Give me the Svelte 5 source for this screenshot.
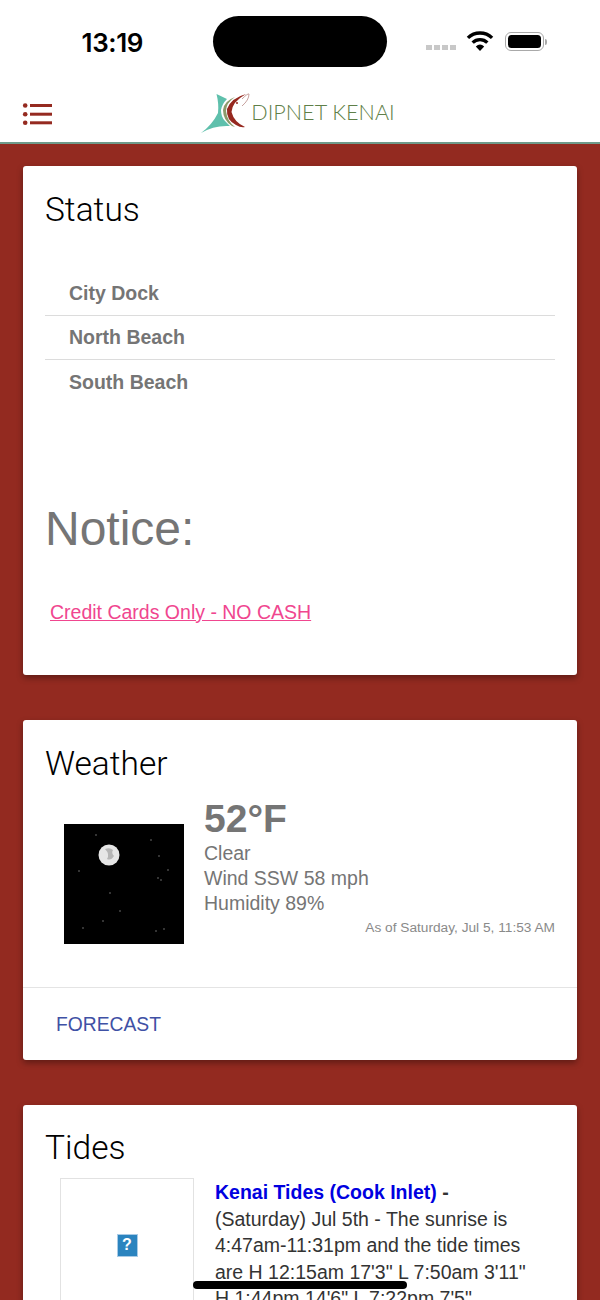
<script>
	let beaches = ['City Dock', 'North Beach', 'South Beach'];
	let stars = [[32,11],[87,16],[95,32],[104,46],[15,47],[94,54],[97,56],[46,69],[56,87],[39,97],[19,104],[92,107],[100,105]];
</script>

<div class="screen">
	<div class="status">
		<div class="time">13:19</div>
		<div class="island"></div>
		<div class="right">
			<div class="dots"><i></i><i></i><i></i><i></i></div>
			<svg class="wifi" width="28" height="21" viewBox="0 0 26 20">
				<path d="M1.5 7.5A16.5 16.5 0 0 1 24.5 7.5" fill="none" stroke="#000" stroke-width="3.2"/>
				<path d="M6 12A10 10 0 0 1 20 12" fill="none" stroke="#000" stroke-width="3.2"/>
				<path d="M9 15.6Q13 12 17 15.6L13 20Z" fill="#000"/>
			</svg>
			<div class="battery"><div class="fill"></div></div>
			<div class="nub"></div>
		</div>
	</div>

	<header>
		<svg class="menu" width="30" height="24" viewBox="0 0 30 24">
			<g fill="#952a20">
				<circle cx="3.2" cy="3.5" r="2.3"/><circle cx="3.2" cy="12.2" r="2.3"/><circle cx="3.2" cy="20.8" r="2.3"/>
				<rect x="8" y="2" width="22" height="3"/><rect x="8" y="10.7" width="22" height="3"/><rect x="8" y="19.3" width="22" height="3"/>
			</g>
		</svg>
		<div class="logo">
			<svg width="52" height="44" viewBox="0 0 52 44">
				<path d="M16.5 3L27 8Q22 13 21 19Q21 26 25 30L30 35Q14 34 1 42Q12 34 18 22Q19 13 16.5 3Z" fill="#5fc0ac"/>
				<path d="M35 6Q24 10 23 19Q23 29 32 35L35 36Q27 30 26 20Q26 12 35 6Z" fill="#8d9a6a"/>
				<path d="M46 3Q31 7 27 18Q26 29 36 34Q41 37 45 36Q34 31 31.5 21Q32 11 46 3Z" fill="#96281f"/>
				<path d="M42 8Q48 2 49 3Q49 9 42 15" fill="none" stroke="#b98a86" stroke-width="0.8"/>
				<circle cx="37" cy="12" r="1" fill="#96281f"/>
			</svg>
			<span>DIPNET KENAI</span>
		</div>
	</header>

	<main>
		<section class="card status-card">
			<h2>Status</h2>
			<ul>
				{#each beaches as beach}
					<li>{beach}</li>
				{/each}
			</ul>
			<h1>Notice:</h1>
			<a class="notice" href="#top">Credit Cards Only - NO CASH</a>
		</section>

		<section class="card weather-card">
			<div class="weather-body">
				<h2>Weather</h2>
				<div class="weather">
					<svg class="sky" width="120" height="120" viewBox="0 0 120 120">
						<rect width="120" height="120" fill="#000"/>
						{#each stars as s}
							<circle cx={s[0]} cy={s[1]} r="0.8" fill="#777"/>
						{/each}
						<circle cx="45" cy="31" r="10.5" fill="#e6e6e6"/>
						<path d="M41 25Q46 23 49 26Q47 29 50 32Q47 37 43 35Q46 30 41 25Z" fill="#b5b5b5"/>
					</svg>
					<div class="readings">
						<div class="temp">52°F</div>
						<div>Clear</div>
						<div>Wind SSW 58 mph</div>
						<div>Humidity 89%</div>
						<div class="asof">As of Saturday, Jul 5, 11:53 AM</div>
					</div>
				</div>
			</div>
			<div class="actions"><a href="#top">FORECAST</a></div>
		</section>

		<section class="card tides-card">
			<h2>Tides</h2>
			<div class="tides">
				<div class="thumb">
					<div class="missing">?</div>
				</div>
				<div class="tide-text">
					<b><a href="#top">Kenai Tides (Cook Inlet)</a> -</b><br>
					(Saturday) Jul 5th - The sunrise is 4:47am-11:31pm and the tide times are H 12:15am 17'3" L 7:50am 3'11" H 1:44pm 14'6" L 7:22pm 7'5"
				</div>
			</div>
		</section>
	</main>

	<div class="home"></div>
</div>

<style>
:global(body) {
	margin: 0;
	background: #fff;
}
.screen {
	position: relative;
	width: 600px;
	height: 1300px;
	overflow: hidden;
	background: #932a20;
	font-family: "Liberation Sans", Arial, sans-serif;
}
.status {
	display: grid;
	grid-template-columns: 213px 174px 213px;
	align-items: center;
	height: 84px;
	box-sizing: border-box;
	padding-bottom: 1px;
	background: #fff;
}
.time {
	text-align: right;
	padding-right: 70px;
	padding-top: 1px;
	font-family: Inter, sans-serif;
	font-size: 26px;
	font-weight: 600;
	letter-spacing: -0.4px;
	color: #000;
}
.island {
	height: 51px;
	background: #000;
	border-radius: 26px;
}
.right {
	display: flex;
	align-items: center;
	padding-left: 39px;
}
.dots {
	display: flex;
	gap: 2px;
	margin-top: 12px;
	margin-right: 10px;
}
.dots i {
	width: 6px;
	height: 5px;
	background: #c8c8c8;
}
.wifi {
	margin-right: 11px;
	margin-top: -3px;
}
.battery {
	width: 39px;
	height: 19px;
	box-sizing: border-box;
	padding: 2px;
	border: 1.5px solid #a9a9a9;
	border-radius: 6px;
}
.fill {
	height: 100%;
	background: #000;
	border-radius: 3.5px;
}
.nub {
	width: 2px;
	height: 6px;
	margin-left: 1px;
	background: #a9a9a9;
	border-radius: 0 2px 2px 0;
}
header {
	position: relative;
	display: flex;
	align-items: center;
	justify-content: center;
	height: 58px;
	background: #fff;
	border-bottom: 2px solid #6f9a8a;
}
.menu {
	position: absolute;
	left: 22px;
	top: 18px;
}
.logo {
	display: flex;
	align-items: flex-end;
	margin-left: -5px;
}
.logo svg {
	margin-right: -1px;
}
.logo span {
	margin-bottom: 10px;
	font-family: Lato, sans-serif;
	font-weight: 300;
	font-size: 21.6px;
	color: #5f7f48;
}
main {
	display: flex;
	flex-direction: column;
	gap: 45px;
	padding: 22px 23px 0;
}
.card {
	background: #fff;
	border-radius: 3px;
	box-shadow: 0 3px 6px rgba(0, 0, 0, 0.35);
}
h2 {
	margin: 0;
	font-family: Roboto, sans-serif;
	font-weight: 300;
	font-size: 33.5px;
	line-height: 40px;
	color: #000;
}
.status-card {
	height: 509px;
	box-sizing: border-box;
	padding: 24px 22px 0;
}
ul {
	list-style: none;
	margin: 42px 0 0;
	padding: 0;
}
li {
	height: 44px;
	box-sizing: border-box;
	padding: 9px 0 0 24px;
	font-size: 19.5px;
	line-height: 24px;
	font-weight: 700;
	color: #757575;
	border-bottom: 1px solid #dcdcdc;
}
li:last-child {
	padding-top: 10px;
	border-bottom: 0;
}
h1 {
	margin: 97px 0 0;
	font-size: 48px;
	line-height: 56px;
	font-weight: 400;
	color: #757575;
}
.notice {
	display: block;
	margin: 43px 0 0 5px;
	font-size: 19.5px;
	line-height: 24px;
	color: #f0468f;
}
.weather-card {
	height: 340px;
	display: flex;
	flex-direction: column;
}
.weather-body {
	flex: 1;
	padding: 24px 22px 0;
}
.weather {
	display: flex;
	margin-top: -5px;
}
.sky {
	flex: none;
	margin: 45px 20px 0 19px;
}
.readings {
	flex: 1;
	font-size: 19.5px;
	line-height: 25px;
	color: #757575;
}
.temp {
	font-size: 39px;
	font-weight: 700;
	line-height: 45px;
	margin-top: 17px;
}
.asof {
	margin-top: 2px;
	text-align: right;
	font-size: 13.7px;
	line-height: 20px;
	color: #8a8a8a;
}
.actions {
	height: 73px;
	box-sizing: border-box;
	padding: 25px 33px 0;
	border-top: 1px solid #e4e4e4;
}
.actions a {
	font-size: 19.3px;
	line-height: 24px;
	color: #3f51a5;
	text-decoration: none;
}
.tides-card {
	height: 300px;
	padding: 23px 22px 0;
}
.tides {
	display: flex;
	margin-top: 10px;
}
.thumb {
	flex: none;
	display: flex;
	justify-content: center;
	padding-top: 55px;
	box-sizing: border-box;
	width: 134px;
	height: 180px;
	margin: 0 21px 0 15px;
	border: 1px solid #e2e2e2;
}
.missing {
	width: 19px;
	height: 21px;
	line-height: 20px;
	text-align: center;
	font-size: 16px;
	font-weight: 700;
	color: #fff;
	background: #2b84bf;
	border: 1px solid #a9cbe6;
}
.tide-text {
	margin-top: 1px;
	padding-right: 20px;
	font-size: 19.5px;
	line-height: 26.5px;
	color: #333;
}
.tide-text b a {
	color: #0000e0;
	text-decoration: none;
}
.home {
	position: absolute;
	left: 193px;
	top: 1281px;
	width: 214px;
	height: 8px;
	background: #000;
	border-radius: 4px;
}
</style>
